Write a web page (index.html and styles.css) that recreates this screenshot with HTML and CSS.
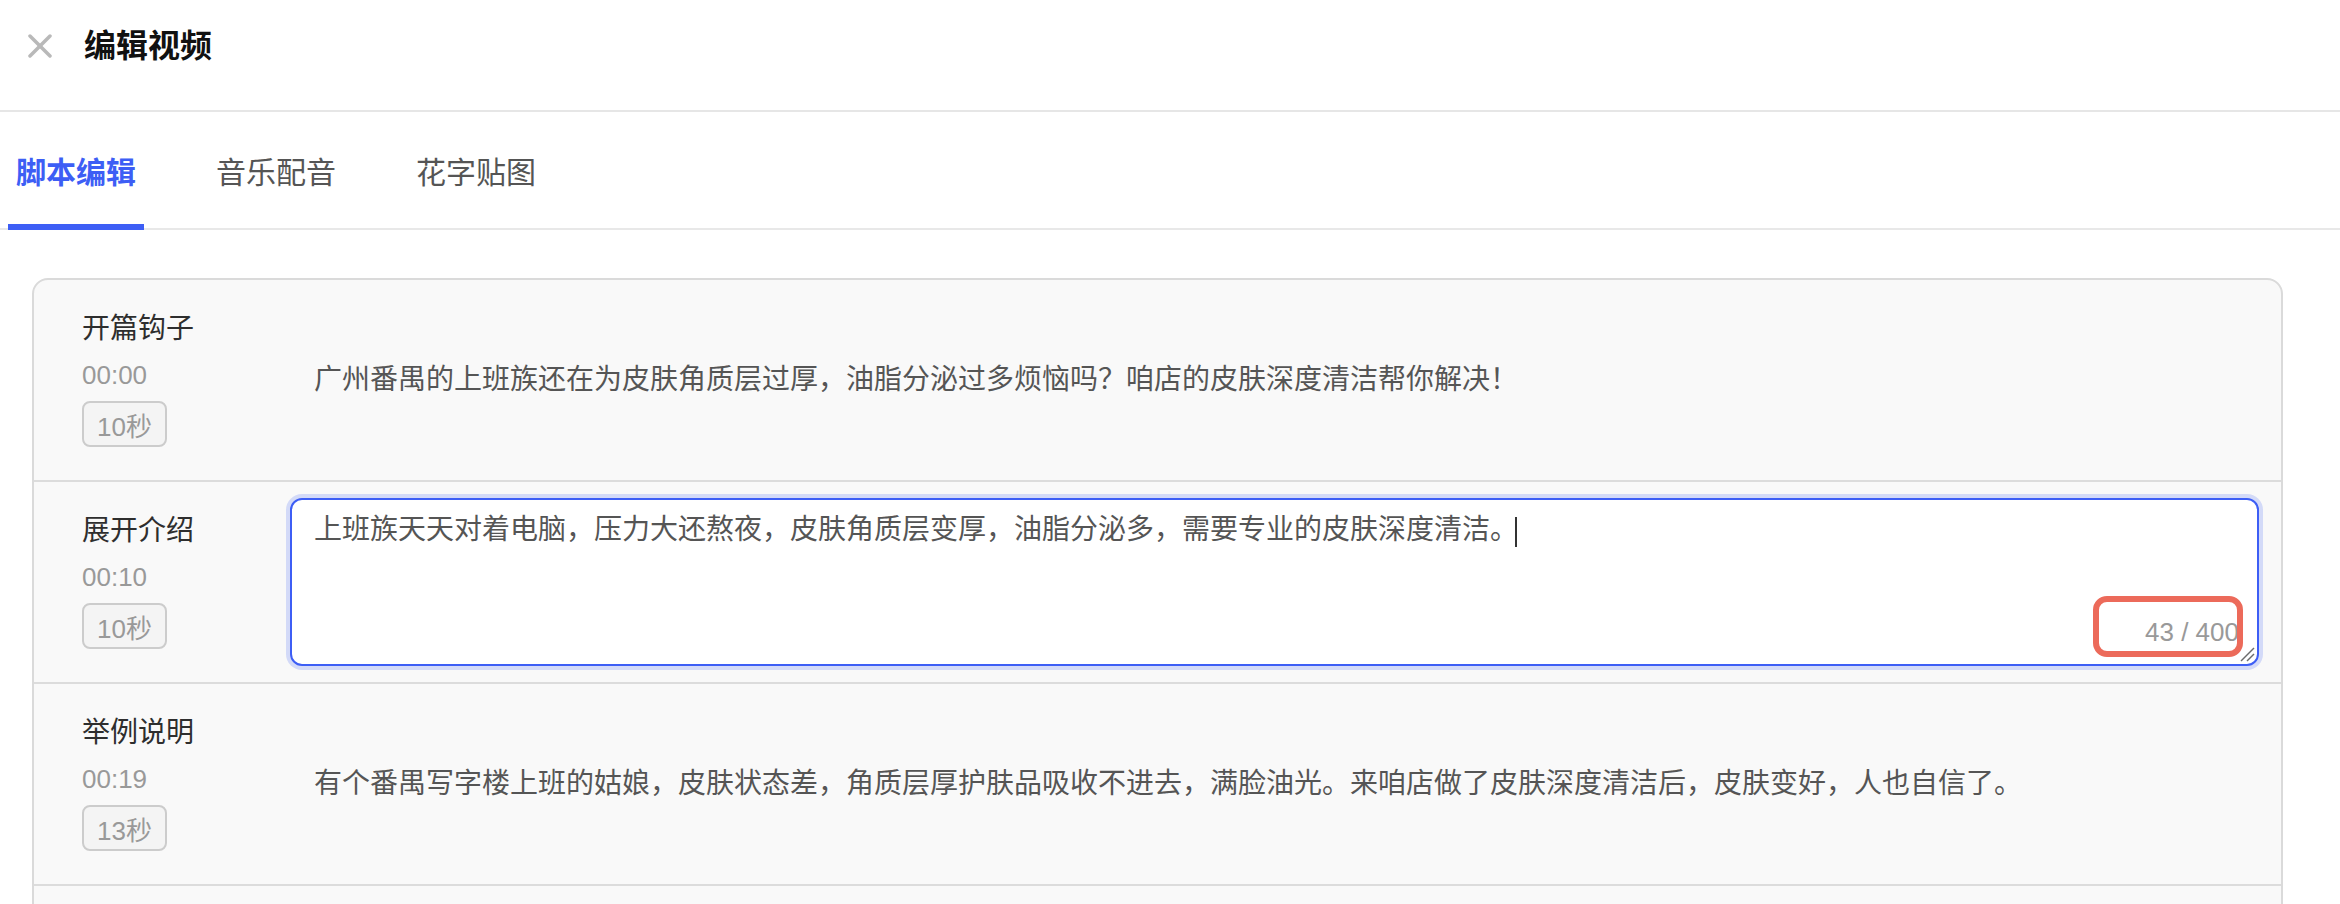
FILE: index.html
```html
<!DOCTYPE html>
<html lang="zh-CN">
<head>
<meta charset="utf-8">
<title>编辑视频</title>
<link rel="stylesheet" href="styles.css">
</head>
<body>
<header class="header">
  <svg class="close" width="24" height="24" viewBox="0 0 24 24" aria-hidden="true">
    <line x1="2" y1="2" x2="22" y2="22"/>
    <line x1="22" y1="2" x2="2" y2="22"/>
  </svg>
  <h1 class="title">编辑视频</h1>
</header>
<nav class="tabs">
  <div class="tab active">脚本编辑</div>
  <div class="tab">音乐配音</div>
  <div class="tab">花字贴图</div>
</nav>
<main class="card">
  <section class="row">
    <div class="meta">
      <div class="label">开篇钩子</div>
      <div class="time">00:00</div>
      <div class="dur">10秒</div>
    </div>
    <div class="content">广州番禺的上班族还在为皮肤角质层过厚，油脂分泌过多烦恼吗？咱店的皮肤深度清洁帮你解决！</div>
  </section>
  <section class="row">
    <div class="meta">
      <div class="label">展开介绍</div>
      <div class="time">00:10</div>
      <div class="dur">10秒</div>
    </div>
    <div class="editor">上班族天天对着电脑，压力大还熬夜，皮肤角质层变厚，油脂分泌多，需要专业的皮肤深度清洁。<span class="caret"></span>
      <span class="count">43 / 400</span>
      <span class="mark"></span>
      <svg class="grip" width="16" height="16" viewBox="0 0 16 16" aria-hidden="true">
        <line x1="2" y1="15" x2="15" y2="2"/>
        <line x1="8" y1="15" x2="15" y2="8"/>
      </svg>
    </div>
  </section>
  <section class="row">
    <div class="meta">
      <div class="label">举例说明</div>
      <div class="time">00:19</div>
      <div class="dur">13秒</div>
    </div>
    <div class="content">有个番禺写字楼上班的姑娘，皮肤状态差，角质层厚护肤品吸收不进去，满脸油光。来咱店做了皮肤深度清洁后，皮肤变好，人也自信了。</div>
  </section>
  <section class="row"></section>
</main>
</body>
</html>
```

FILE: styles.css
```css
html, body {
  margin: 0;
  padding: 0;
  background: #ffffff;
  overflow: hidden;
}

body {
  font-family: "Liberation Sans", "Noto Sans CJK SC", sans-serif;
  color: #333333;
}

.header {
  display: flex;
  align-items: center;
  height: 92px;
  padding: 0 0 18px 28px;
  border-bottom: 2px solid #e6e6e6;
}

.close {
  flex: none;
  stroke: #b9b9b9;
  stroke-width: 3.5;
  stroke-linecap: round;
}

.title {
  margin: 0 0 0 32px;
  font-size: 32px;
  line-height: 40px;
  font-weight: 700;
  color: #111111;
}

.tabs {
  display: flex;
  gap: 64px;
  padding-left: 8px;
  height: 116px;
  border-bottom: 2px solid #e8e8e8;
}

.tab {
  position: relative;
  display: flex;
  align-items: center;
  padding: 0 8px;
  font-size: 30px;
  color: #555555;
}

.tab.active {
  color: #3d5ef5;
  font-weight: 700;
}

.tab.active::after {
  content: "";
  position: absolute;
  left: 0;
  right: 0;
  bottom: -2px;
  height: 6px;
  background: #3d5ef5;
}

.card {
  display: block;
  margin: 48px 57px 0 32px;
  border: 2px solid #dadada;
  border-radius: 16px;
  background: #f9f9f9;
  overflow: hidden;
}

.row {
  display: flex;
  align-items: center;
  min-height: 202px;
  box-sizing: border-box;
  padding: 16px 22px 16px 48px;
  border-bottom: 2px solid #dcdcdc;
}

.meta {
  flex: none;
  width: 208px;
  display: flex;
  flex-direction: column;
  align-items: flex-start;
  padding-bottom: 4px;
}

.label {
  font-size: 28px;
  line-height: 40px;
  color: #2e2e2e;
}

.time {
  margin-top: 8px;
  font-size: 26px;
  line-height: 36px;
  color: #999999;
}

.dur {
  margin-top: 8px;
  height: 46px;
  box-sizing: border-box;
  display: flex;
  align-items: center;
  padding: 0 13px;
  border: 2px solid #cccccc;
  border-radius: 8px;
  background: #f4f4f4;
  font-size: 26px;
  color: #999999;
}

.content {
  flex: 1;
  padding: 0 24px;
  font-size: 28px;
  line-height: 44px;
  color: #555555;
}

.editor {
  flex: 1;
  position: relative;
  height: 168px;
  box-sizing: border-box;
  padding: 8px 22px;
  border: 2px solid #3d5ef5;
  border-radius: 12px;
  background: #ffffff;
  box-shadow: 0 0 0 4px rgba(61, 94, 245, 0.2);
  font-size: 28px;
  line-height: 44px;
  color: #555555;
}

.caret {
  display: inline-block;
  width: 2px;
  height: 30px;
  margin-left: -3px;
  background: #333333;
  vertical-align: middle;
}

.count {
  position: absolute;
  right: 18px;
  bottom: 17px;
  font-size: 26px;
  line-height: 30px;
  color: #999999;
}

.mark {
  position: absolute;
  right: 14px;
  bottom: 7px;
  width: 150px;
  height: 61px;
  box-sizing: border-box;
  border: 6px solid #ec6a5a;
  border-radius: 14px;
}

.grip {
  position: absolute;
  right: 2px;
  bottom: 2px;
  stroke: #6b6b6b;
  stroke-width: 1.5;
}
```
